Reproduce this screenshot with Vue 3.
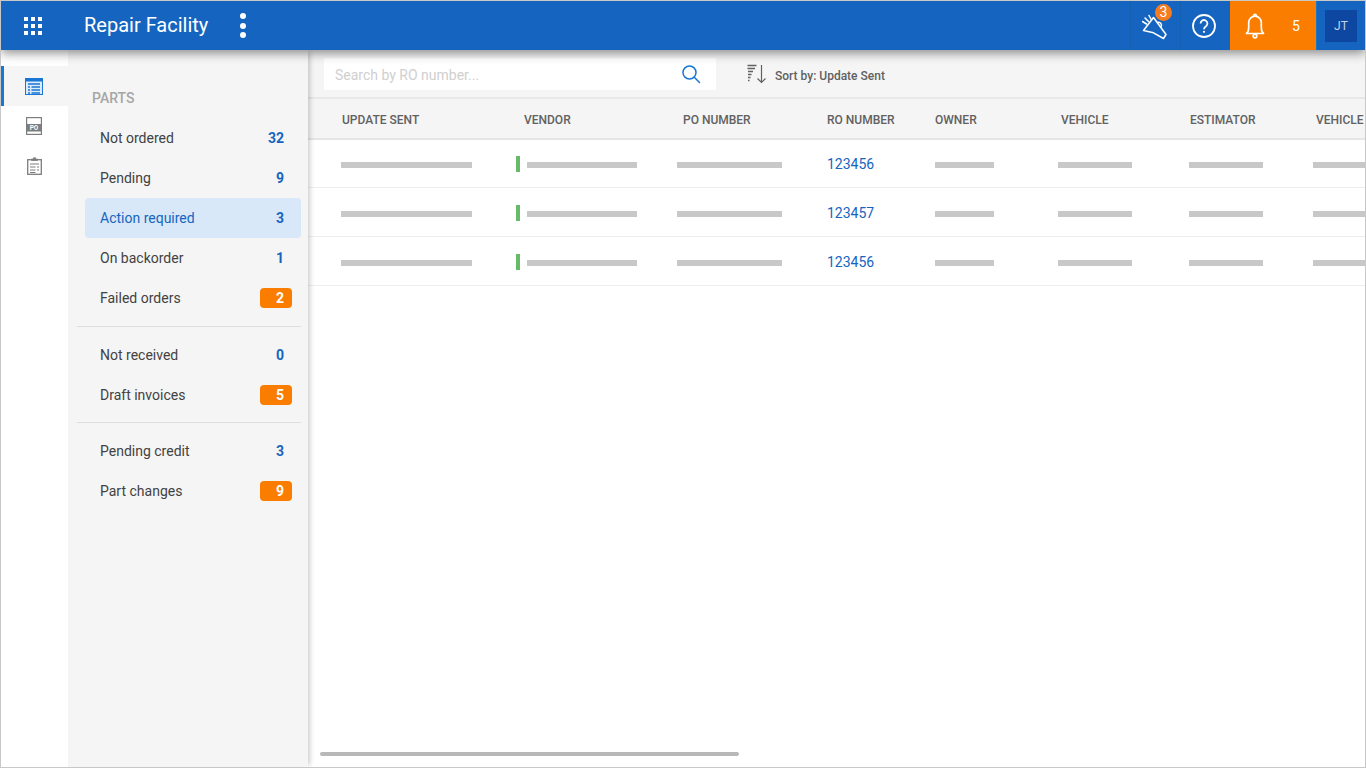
<template>
  <div class="frame">
    <header class="topbar">
      <button class="apps-btn" aria-label="Apps">
        <svg width="18" height="18" viewBox="0 0 18 18" fill="#fff">
          <template v-for="y in [0, 7, 14]" :key="y">
            <rect v-for="x in [0, 7, 14]" :key="x" :x="x" :y="y" width="4" height="4" />
          </template>
        </svg>
      </button>
      <h1 class="app-title">Repair Facility</h1>
      <button class="more-btn" aria-label="More">
        <span></span><span></span><span></span>
      </button>

      <div class="top-actions">
        <button class="top-icon" aria-label="Announcements">
          <svg width="28" height="28" viewBox="0 0 28 28" fill="none" stroke="#fff" stroke-width="1.5" stroke-linejoin="round" stroke-linecap="round">
            <path d="M1.500 18.500L11.500 5.500l12.500 17-2.500 4-10-5.700z" />
            <path d="M15.500 10.500a3 3 0 0 1 3.500 4.500" />
            <path d="M0.500 9.500l4 2.500M3 6l3.500 3.500M7 3.500L9.500 8" />
          </svg>
          <span class="top-badge">3</span>
        </button>
        <button class="top-icon help" aria-label="Help">
          <svg width="26" height="26" viewBox="0 0 26 26" fill="none" stroke="#fff">
            <circle cx="13" cy="13" r="11" stroke-width="1.8" />
            <path d="M9.600 10.400a3.400 3.400 0 1 1 5.400 2.800c-1.300.9-2 1.500-2 3" stroke-width="1.8" />
            <circle cx="13" cy="18.800" r="1.100" fill="#fff" stroke="none" />
          </svg>
        </button>
        <button class="alerts" aria-label="Alerts">
          <svg width="20" height="26" viewBox="0 0 20 26" fill="none" stroke="#fff" stroke-width="1.7" stroke-linejoin="round">
            <path d="M1.500 20.500c1.600-1.300 2.200-2.800 2.200-6V9.500a6.300 6.300 0 0 1 12.600 0v5c0 3.200.6 4.700 2.200 6z" />
            <path d="M8.800 3.200V2.500a1.200 1.200 0 0 1 2.400 0v.7" />
            <circle cx="10" cy="23" r="1.800" />
          </svg>
          <span class="alerts-count">5</span>
        </button>
        <div class="avatar-wrap">
          <div class="avatar">JT</div>
        </div>
      </div>
    </header>

    <div class="body">
      <nav class="rail">
        <a class="rail-item active" aria-label="Parts">
          <svg width="18" height="17" viewBox="0 0 18 17">
            <rect x="0.500" y="0.500" width="17" height="16" fill="#dcebfa" stroke="#1976d2" />
            <rect x="1" y="1" width="16" height="2.500" fill="#1976d2" />
            <path d="M3 6h12M3 9h2M6.500 9h8.500M3 12h2M6.500 12h8.500M3 15h2M6.500 15h8.500" stroke="#1976d2" stroke-width="1.300" />
          </svg>
        </a>
        <a class="rail-item" aria-label="Purchase orders">
          <svg width="16" height="18" viewBox="0 0 16 18">
            <rect x="0.600" y="0.600" width="14.800" height="16.800" fill="#fff" stroke="#7d7d7d" stroke-width="1.200" />
            <rect x="1" y="7" width="14" height="7.500" fill="#7d7d7d" />
            <text x="8" y="13" text-anchor="middle" class="po-text">PO</text>
          </svg>
        </a>
        <a class="rail-item" aria-label="Checklists">
          <svg width="15" height="18" viewBox="0 0 15 18" fill="none" stroke="#7d7d7d">
            <rect x="0.700" y="2.700" width="13.600" height="14.600" stroke-width="1.300" />
            <path d="M4.500 3.500V2h2V0.800h2V2h2v1.500z" fill="#7d7d7d" stroke-width="0.800" />
            <path d="M3 7h9M3 10h5.500M10 10h2M3 13h5.500M10 13h2M3 15.500h5.500" stroke-width="1.200" />
          </svg>
        </a>
      </nav>

      <aside class="sidebar">
        <h2 class="side-title">PARTS</h2>
        <template v-for="(group, i) in groups" :key="i">
          <hr v-if="i > 0" class="side-divider" />
          <ul class="side-group">
            <li
              v-for="item in group"
              :key="item.label"
              class="side-row"
              :class="{ selected: item.selected }"
            >
              <span>{{ item.label }}</span>
              <span class="count" :class="{ alert: item.alert }">{{ item.count }}</span>
            </li>
          </ul>
        </template>
      </aside>

      <main class="content">
        <div class="toolbar">
          <div class="search">
            <input type="text" placeholder="Search by RO number..." />
            <svg width="20" height="20" viewBox="0 0 20 20" fill="none" stroke="#1976d2" stroke-width="1.500" stroke-linecap="round">
              <circle cx="8.500" cy="8.500" r="6.500" />
              <path d="M13.300 13.300L18.500 18.500" />
            </svg>
          </div>
          <button class="sort">
            <svg width="20" height="20" viewBox="0 0 20 20" fill="none" stroke="#616161" stroke-width="1.300">
              <path d="M0.500 1.500h9M0.500 4.500h7.500M1 7.500h5M1 10.500h3.500M1 13.500h2.500M1 16.500h1.500" />
              <path d="M14.500 1v17M10.500 14.500l4 4 4-4" stroke-width="1.200" />
            </svg>
            <span class="sort-label">Sort by: Update Sent</span>
          </button>
        </div>

        <div class="table">
          <div class="thead" :style="gridStyle">
            <div v-for="col in columns" :key="col.label" class="th" :style="{ paddingLeft: col.pad + 'px' }">
              {{ col.label }}
            </div>
          </div>
          <div v-for="row in rows" :key="row.id" class="tr" :style="gridStyle">
            <div v-for="col in columns" :key="col.label" class="td">
              <a v-if="col.ro" class="ro-link">{{ row.ro }}</a>
              <template v-else>
                <span v-if="col.status" class="status"></span>
                <span class="skeleton" :style="{ width: col.bar + 'px' }"></span>
              </template>
            </div>
          </div>
        </div>

        <div class="hscroll"></div>
      </main>
    </div>
  </div>
</template>

<script setup>
import { computed } from 'vue'

const groups = [
  [
    { label: 'Not ordered', count: 32 },
    { label: 'Pending', count: 9 },
    { label: 'Action required', count: 3, selected: true },
    { label: 'On backorder', count: 1 },
    { label: 'Failed orders', count: 2, alert: true }
  ],
  [
    { label: 'Not received', count: 0 },
    { label: 'Draft invoices', count: 5, alert: true }
  ],
  [
    { label: 'Pending credit', count: 3 },
    { label: 'Part changes', count: 9, alert: true }
  ]
]

// width = distance to next column, pad = how far the header text sits from the cell start
const columns = [
  { label: 'UPDATE SENT', width: 175, pad: 1, bar: 131 },
  { label: 'VENDOR', width: 161, pad: 8, bar: 110, status: true },
  { label: 'PO NUMBER', width: 150, pad: 6, bar: 105 },
  { label: 'RO NUMBER', width: 108, pad: 0, ro: true },
  { label: 'OWNER', width: 123, pad: 0, bar: 59 },
  { label: 'VEHICLE', width: 131, pad: 3, bar: 74 },
  { label: 'ESTIMATOR', width: 124, pad: 1, bar: 74 },
  { label: 'VEHICLE', width: 120, pad: 3, bar: 80 }
]

const rows = [
  { id: 1, ro: '123456' },
  { id: 2, ro: '123457' },
  { id: 3, ro: '123456' }
]

const gridStyle = computed(() => ({
  gridTemplateColumns: columns.map((c) => c.width + 'px').join(' ')
}))
</script>

<style scoped>
.frame {
  width: 1366px;
  height: 768px;
  box-sizing: border-box;
  border: 1px solid #c8c8c8;
  display: flex;
  flex-direction: column;
  overflow: hidden;
  background: #fff;
  font-family: Roboto, "Liberation Sans", sans-serif;
  color: #424242;
}

button {
  border: none;
  background: none;
  padding: 0;
  font-family: inherit;
  color: inherit;
}

/* top bar */
.topbar {
  height: 49px;
  flex: none;
  display: flex;
  align-items: center;
  background: #1565c0;
  position: relative;
  z-index: 3;
  box-shadow: 0 3px 10px rgba(0, 0, 0, 0.45);
}

.apps-btn {
  width: 18px;
  height: 18px;
  margin-left: 23px;
  display: flex;
}

.app-title {
  margin: 0 0 2px 42px;
  font-size: 20px;
  font-weight: 400;
  color: #fff;
  white-space: nowrap;
}

.more-btn {
  margin-left: 32px;
  display: flex;
  flex-direction: column;
  gap: 3.500px;
}

.more-btn span {
  width: 6px;
  height: 6px;
  border-radius: 50%;
  background: #fff;
}

.top-actions {
  margin-left: auto;
  height: 100%;
  display: flex;
}

.top-icon {
  width: 50px;
  height: 100%;
  display: flex;
  align-items: center;
  justify-content: center;
  border-left: 1px solid #1260ae;
  position: relative;
  box-sizing: border-box;
}

.top-icon.help {
  padding-right: 3px;
}

.top-badge {
  position: absolute;
  top: 3px;
  right: 8px;
  width: 17px;
  height: 17px;
  border-radius: 50%;
  background: #f57c20;
  color: #fff;
  font-size: 14px;
  line-height: 17px;
  text-align: center;
}

.alerts {
  width: 86px;
  height: 100%;
  background: #fb7d00;
  display: flex;
  align-items: center;
  padding-left: 15px;
  box-sizing: border-box;
}

.alerts-count {
  margin-left: 27px;
  font-size: 14px;
  color: #fff;
}

.avatar-wrap {
  width: 49px;
  box-sizing: border-box;
  display: flex;
  align-items: center;
  justify-content: center;
  border-left: 1px solid #1a78c2;
}

.avatar {
  width: 32px;
  height: 32px;
  background: #0d47a1;
  color: #c5d5ec;
  font-size: 12px;
  line-height: 32px;
  text-align: center;
}

/* page body */
.body {
  flex: 1;
  display: flex;
  min-height: 0;
}

.rail {
  width: 67px;
  flex: none;
  padding-top: 16px;
  box-sizing: border-box;
  background: #fff;
}

.rail-item {
  height: 40px;
  display: flex;
  align-items: center;
  justify-content: center;
  padding-right: 1px;
}

.rail-item.active {
  background: #f5f5f5;
  box-shadow: inset 3px 0 0 #1976d2;
}

.po-text {
  font-family: Roboto, "Liberation Sans", sans-serif;
  font-size: 6.500px;
  font-weight: 700;
  fill: #fff;
}

/* sidebar */
.sidebar {
  width: 240px;
  flex: none;
  box-sizing: border-box;
  padding: 40px 7px 0 9px;
  background: #f5f5f5;
  position: relative;
  z-index: 2;
  box-shadow: 4px 0 5px -2px rgba(0, 0, 0, 0.2);
}

.side-title {
  margin: 0 0 12px 15px;
  font-size: 14px;
  line-height: 16px;
  font-weight: 500;
  color: #a6a6a6;
}

.side-group {
  list-style: none;
  margin: 0;
  padding: 0 0 0 8px;
}

.side-row {
  height: 40px;
  display: flex;
  align-items: center;
  justify-content: space-between;
  padding: 0 9px 0 15px;
  border-radius: 4px;
  font-size: 14px;
  color: #424242;
}

.side-row.selected {
  background: #d8e8f8;
  color: #1565c0;
}

.side-divider {
  margin: 8px 0;
  border: none;
  border-top: 1px solid #dedede;
}

.side-divider ~ .side-divider {
  margin-top: 7px;
}

.count {
  min-width: 32px;
  padding-right: 8px;
  box-sizing: border-box;
  text-align: right;
  font-weight: 700;
  color: #1565c0;
}

.count.alert {
  height: 20px;
  line-height: 20px;
  border-radius: 4px;
  background: #fb7d00;
  color: #fff;
}

/* main */
.content {
  flex: 1;
  min-width: 0;
  position: relative;
  overflow: hidden;
}

.toolbar {
  height: 47px;
  box-sizing: border-box;
  padding-top: 8px;
  display: flex;
  background: #f5f5f5;
}

.search {
  width: 392px;
  height: 32px;
  margin-left: 16px;
  padding: 0 15px 0 11px;
  box-sizing: border-box;
  display: flex;
  align-items: center;
  background: #fff;
}

.search input {
  flex: 1;
  min-width: 0;
  border: none;
  outline: none;
  padding: 2px 0 0;
  background: transparent;
  font-family: inherit;
  font-size: 14px;
}

.search input::placeholder {
  color: #cfcfcf;
  opacity: 1;
}

.sort {
  margin-left: 31px;
  height: 32px;
  display: flex;
  align-items: center;
  gap: 8px;
  font-size: 12px;
  font-weight: 500;
  color: #616161;
}

.sort-label {
  padding-top: 3px;
}

.thead,
.tr {
  display: grid;
  padding-left: 33px;
}

.thead {
  height: 43px;
  box-sizing: border-box;
  padding-top: 2px;
  margin-bottom: -1px;
  align-items: center;
  background: #f5f5f5;
  border-top: 2px solid #e8e8e8;
  border-bottom: 2px solid #e6e6e6;
  position: relative;
}

.th {
  font-size: 12px;
  font-weight: 500;
  color: #616161;
  white-space: nowrap;
}

.tr {
  height: 49px;
  box-sizing: border-box;
  padding-top: 2px;
  align-items: center;
  border-bottom: 1px solid #eeeeee;
}

.td {
  display: flex;
  align-items: center;
}

.status {
  width: 4px;
  height: 16px;
  margin-right: 7px;
  background: #66bb6a;
}

.skeleton {
  height: 6px;
  margin-top: 2px;
  flex: none;
  background: #c8c8c8;
}

.ro-link {
  font-size: 14px;
  color: #1565c0;
}

/* overlay scrollbar */
.hscroll {
  position: absolute;
  left: 12px;
  bottom: 11px;
  width: 419px;
  height: 4px;
  border-radius: 2px;
  background: #b8b8b8;
}
</style>
